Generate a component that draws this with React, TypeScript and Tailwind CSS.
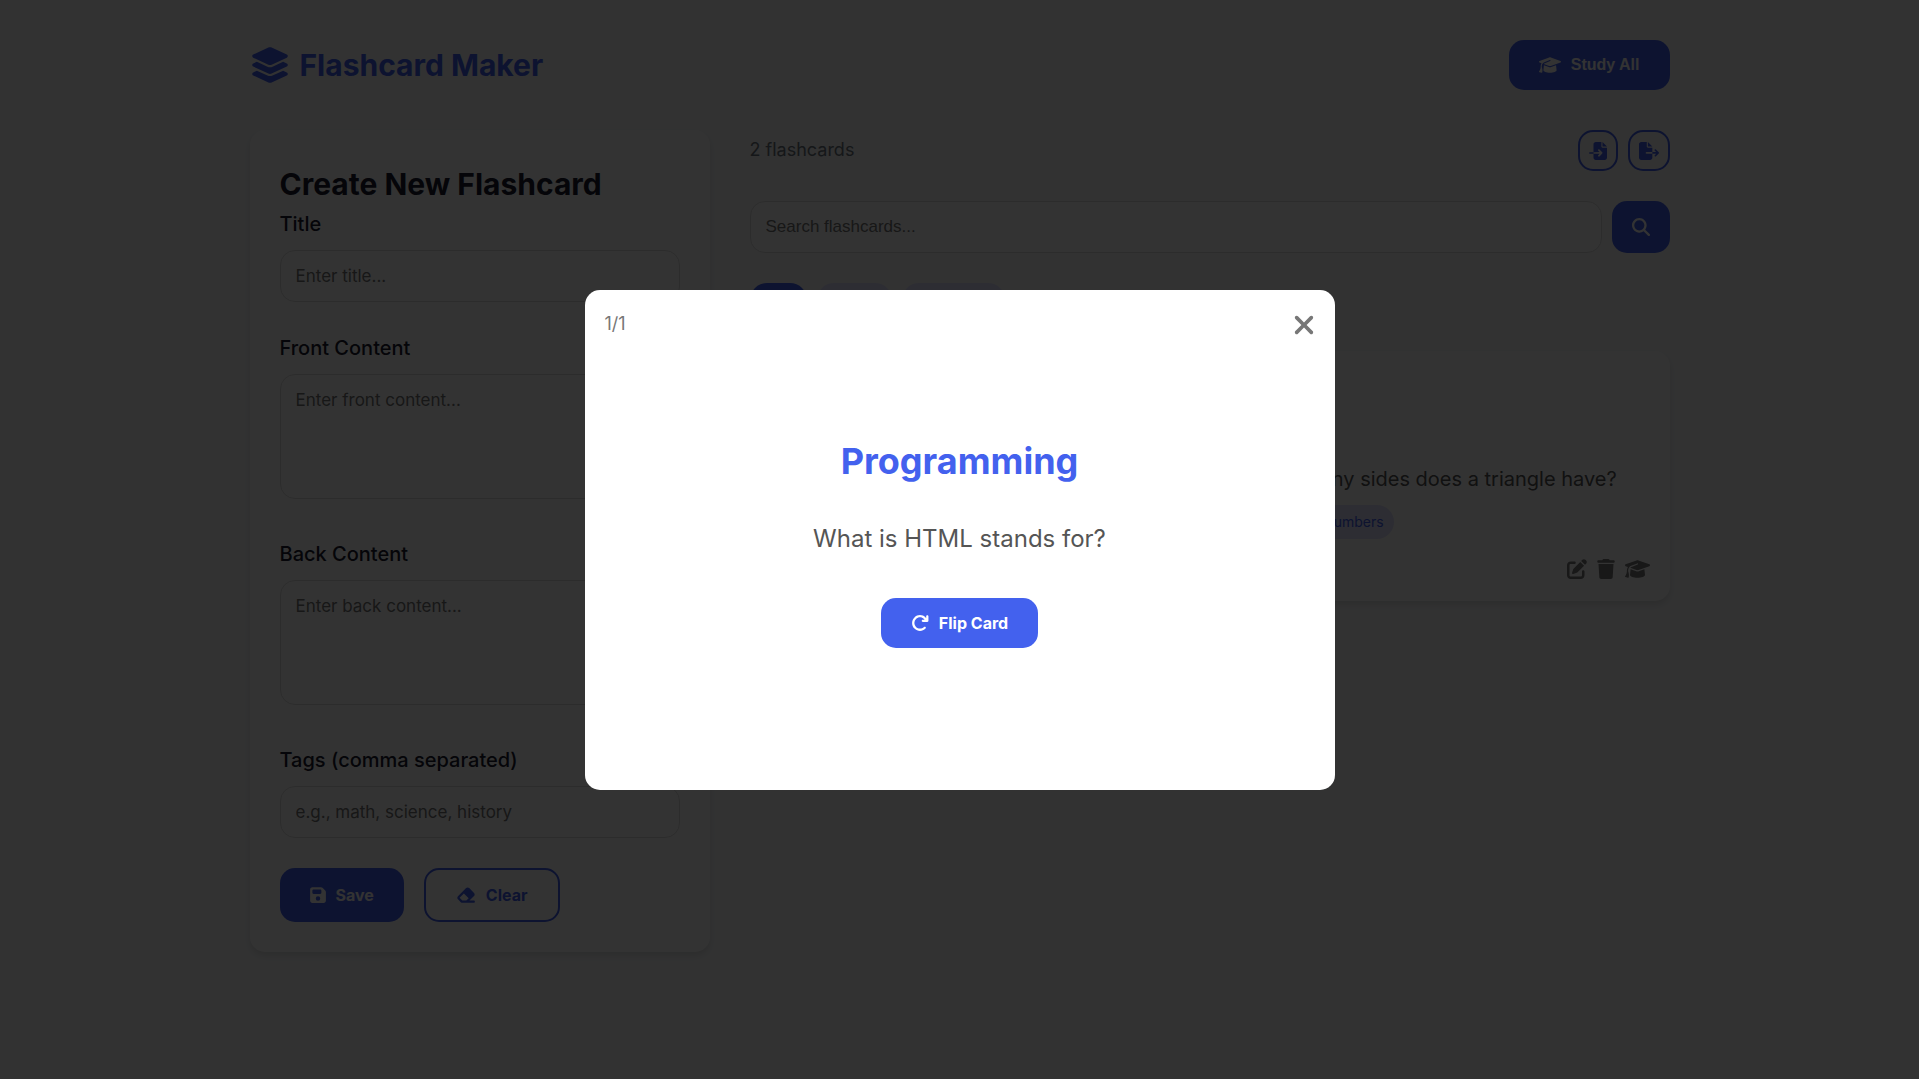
import { useState } from "react";
import {
  FaArrowRotateRight,
  FaEraser,
  FaFileExport,
  FaFileImport,
  FaFloppyDisk,
  FaGraduationCap,
  FaLayerGroup,
  FaMagnifyingGlass,
  FaPenToSquare,
  FaTrash,
  FaXmark,
} from "react-icons/fa6";

interface Flashcard {
  id: number;
  title: string;
  front: string;
  back: string;
  tags: string[];
}

const initialCards: Flashcard[] = [
  {
    id: 1,
    title: "Programming",
    front: "What is HTML stands for?",
    back: "HyperText Markup Language",
    tags: [],
  },
  {
    id: 2,
    title: "Math",
    front: "How many sides does a triangle have?",
    back: "Three",
    tags: ["math", "numbers"],
  },
];

const fieldClass =
  "block w-full rounded-[15px] border border-[#ddd] bg-white p-[15px] text-[17px] leading-5 text-[#212529] placeholder:text-[#757575] outline-none";

const primaryButton =
  "flex items-center justify-center gap-2.5 rounded-[15px] bg-[#4361ee] px-[30px] text-base font-bold text-white";

const outlineButton =
  "flex items-center justify-center rounded-[15px] border-2 border-[#4361ee] text-[#4361ee]";

function Field({
  id,
  label,
  placeholder,
  multiline = false,
}: {
  id: string;
  label: string;
  placeholder: string;
  multiline?: boolean;
}) {
  return (
    <div className={multiline ? "mb-[39px]" : "mb-[30px]"}>
      <label
        htmlFor={id}
        className="mb-2.5 block text-xl leading-8 font-medium"
      >
        {label}
      </label>
      {multiline ? (
        <textarea
          id={id}
          placeholder={placeholder}
          className={`${fieldClass} h-[125px] resize-none`}
        />
      ) : (
        <input
          id={id}
          type="text"
          placeholder={placeholder}
          className={fieldClass}
        />
      )}
    </div>
  );
}

function FlashcardItem({ card }: { card: Flashcard }) {
  return (
    <article className="flex min-h-[250px] flex-col rounded-[15px] bg-white p-5 shadow-[0_4px_6px_rgba(0,0,0,0.1)]">
      <h3 className="px-2.5 text-2xl leading-9 font-bold text-[#4361ee]">
        {card.title}
      </h3>
      <p className="mt-auto mb-2.5 px-2.5 text-xl leading-8 text-[#555]">
        {card.front}
      </p>
      <div className="mb-5 flex min-h-[34px] gap-2 px-2.5">
        {card.tags.map((tag) => (
          <span
            key={tag}
            className="rounded-full bg-[#e0e0ff] px-2.5 py-[5px] text-sm leading-6 text-[#4361ee]"
          >
            {tag}
          </span>
        ))}
      </div>
      <div className="flex justify-end gap-2.5 pb-0.5 text-[#777]">
        <button aria-label="Edit">
          <FaPenToSquare className="size-5" />
        </button>
        <button aria-label="Delete">
          <FaTrash className="h-5 w-[18px]" />
        </button>
        <button aria-label="Study">
          <FaGraduationCap className="h-5 w-[25px]" />
        </button>
      </div>
    </article>
  );
}

export default function App() {
  const [cards] = useState<Flashcard[]>(initialCards);
  const [activeTag, setActiveTag] = useState("All");
  const [studying, setStudying] = useState<Flashcard | null>(initialCards[0]);
  const [flipped, setFlipped] = useState(false);

  const tags = ["All", ...new Set(cards.flatMap((c) => c.tags))];

  const openStudy = () => {
    setFlipped(false);
    setStudying(cards[0]);
  };

  return (
    <div className="min-h-screen bg-[#f8f9fa] font-['Inter',sans-serif] text-[#1a1a2e]">
      <div className="mx-auto max-w-[1500px] p-10">
        <header className="mb-10 flex items-center justify-between">
          <h1 className="flex items-center gap-2.5 text-3xl leading-[48px] font-bold text-[#4361ee]">
            <FaLayerGroup className="h-9 w-10" />
            Flashcard Maker
          </h1>
          <button
            onClick={openStudy}
            className={`${primaryButton} h-[50px] font-['Liberation_Sans',sans-serif]`}
          >
            <FaGraduationCap className="h-[18px] w-[22px]" />
            Study All
          </button>
        </header>

        <main className="grid grid-cols-[1fr_2fr] items-start gap-10">
          {/* Create form */}
          <form
            onSubmit={(e) => e.preventDefault()}
            className="rounded-[15px] bg-white p-[30px] shadow-[0_4px_6px_rgba(0,0,0,0.1)]"
          >
            <h2 className="text-3xl leading-[48px] font-bold">
              Create New Flashcard
            </h2>
            <Field id="title" label="Title" placeholder="Enter title..." />
            <Field
              id="front"
              label="Front Content"
              placeholder="Enter front content..."
              multiline
            />
            <Field
              id="back"
              label="Back Content"
              placeholder="Enter back content..."
              multiline
            />
            <Field
              id="tags"
              label="Tags (comma separated)"
              placeholder="e.g., math, science, history"
            />
            <div className="flex gap-5">
              <button type="submit" className={`${primaryButton} h-[54px]`}>
                <FaFloppyDisk className="h-[18px] w-4" />
                Save
              </button>
              <button
                type="reset"
                className={`${outlineButton} h-[54px] gap-2.5 px-[30px] text-base font-bold`}
              >
                <FaEraser className="h-[18px] w-5" />
                Clear
              </button>
            </div>
          </form>

          {/* Card list */}
          <section>
            <div className="mb-[30px] flex items-start justify-between">
              <p className="text-lg leading-10 text-[#6c757d]">
                {cards.length} flashcards
              </p>
              <div className="flex gap-2.5">
                <button
                  aria-label="Import"
                  className={`${outlineButton} h-[41px] px-[9px]`}
                >
                  <FaFileImport className="size-[18px]" />
                </button>
                <button
                  aria-label="Export"
                  className={`${outlineButton} h-[41px] px-[9px]`}
                >
                  <FaFileExport className="h-[18px] w-5" />
                </button>
              </div>
            </div>

            <div className="mb-[30px] flex gap-2.5">
              <input
                type="search"
                aria-label="Search flashcards"
                placeholder="Search flashcards..."
                className={`${fieldClass} font-['Liberation_Sans',sans-serif]`}
              />
              <button
                aria-label="Search"
                className="flex items-center rounded-[15px] bg-[#4361ee] px-5 text-white"
              >
                <FaMagnifyingGlass className="size-[18px]" />
              </button>
            </div>

            <div className="mb-[34px] flex gap-2.5">
              {tags.map((tag) => (
                <button
                  key={tag}
                  onClick={() => setActiveTag(tag)}
                  className={
                    tag === activeTag
                      ? "rounded-full bg-[#4361ee] px-5 py-[5px] text-[15px] leading-6 text-white"
                      : "rounded-full bg-[#e0e0ff] px-5 py-[5px] text-[15px] leading-6 text-[#4361ee]"
                  }
                >
                  {tag}
                </button>
              ))}
            </div>

            <div className="grid grid-cols-2 gap-[30px]">
              {cards.map((card) => (
                <FlashcardItem key={card.id} card={card} />
              ))}
            </div>
          </section>
        </main>
      </div>

      {studying && (
        <div className="fixed inset-0 flex items-center justify-center bg-black/80">
          <div
            role="dialog"
            aria-modal="true"
            className="flex min-h-[500px] w-full max-w-[750px] flex-col rounded-[15px] bg-white p-5"
          >
            <div className="flex items-start justify-between text-[#777]">
              <span className="text-lg leading-7">1/1</span>
              <button aria-label="Close" onClick={() => setStudying(null)}>
                <FaXmark className="h-[30px] w-[22px]" />
              </button>
            </div>
            <div className="flex flex-1 flex-col items-center justify-center pb-[30px]">
              <h2 className="mb-[30px] text-4xl leading-[58px] font-bold text-[#4361ee]">
                {studying.title}
              </h2>
              <p className="mb-10 text-2xl leading-[38px] text-[#555]">
                {flipped ? studying.back : studying.front}
              </p>
              <button
                onClick={() => setFlipped((f) => !f)}
                className={`${primaryButton} h-[50px]`}
              >
                <FaArrowRotateRight className="size-[18px]" />
                Flip Card
              </button>
            </div>
          </div>
        </div>
      )}
    </div>
  );
}
